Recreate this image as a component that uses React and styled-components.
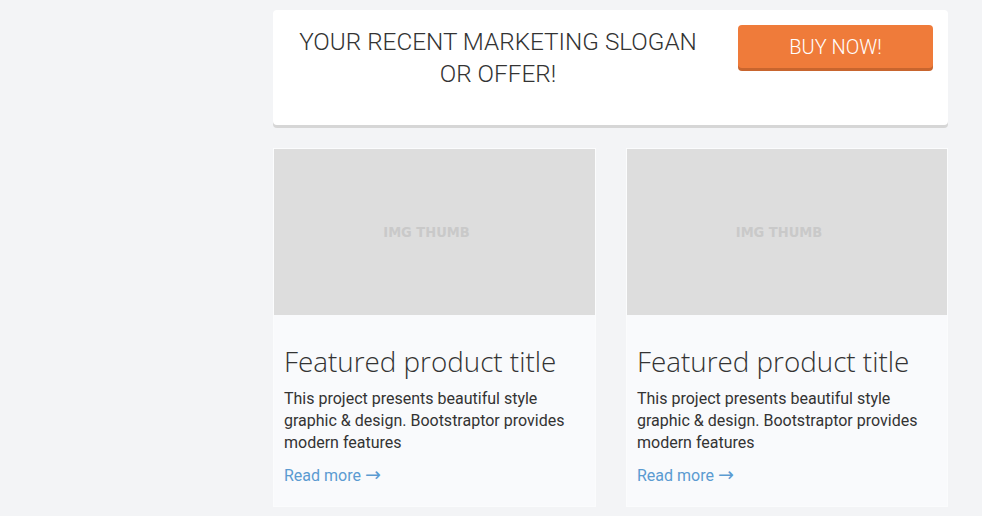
import styled, { createGlobalStyle } from "styled-components";

const GlobalStyle = createGlobalStyle`
  html, body {
    margin: 0;
    padding: 0;
    background: #f3f4f6;
  }
  body {
    font-family: Roboto, "Liberation Sans", sans-serif;
    color: #333;
  }
`;

const products = [
  {
    title: "Featured product title",
    text: "This project presents beautiful style graphic & design. Bootstraptor provides modern features",
  },
  {
    title: "Featured product title",
    text: "This project presents beautiful style graphic & design. Bootstraptor provides modern features",
  },
];

export default function App() {
  return (
    <Page>
      <GlobalStyle />
      <Column>
        <Banner>
          <Slogan>YOUR RECENT MARKETING SLOGAN OR OFFER!</Slogan>
          <BuyButton>BUY NOW!</BuyButton>
        </Banner>
        <Cards>
          {products.map((p, i) => (
            <Card key={i}>
              <Thumb>IMG THUMB</Thumb>
              <CardBody>
                <Title>{p.title}</Title>
                <Text>{p.text}</Text>
                <ReadMore href="#">
                  Read more <Arrow>&rarr;</Arrow>
                </ReadMore>
              </CardBody>
            </Card>
          ))}
        </Cards>
      </Column>
    </Page>
  );
}

const Page = styled.div`
  width: 982px;
  height: 516px;
  overflow: hidden;
  padding: 10px 0 0 273px;
  box-sizing: border-box;
`;

const Column = styled.div`
  width: 675px;
  display: flex;
  flex-direction: column;
  gap: 23px;
`;

const Banner = styled.div`
  height: 115px;
  box-sizing: border-box;
  background: #fff;
  border-radius: 4px;
  box-shadow: 0 3px 0 #d6d6d6;
  display: flex;
  align-items: flex-start;
  padding: 15px 15px 0 25px;
`;

const Slogan = styled.div`
  flex: 0 0 400px;
  margin-top: 1px;
  margin-right: auto;
  text-align: center;
  font-family: Roboto, "Liberation Sans", sans-serif;
  font-weight: 300;
  font-size: 24.3px;
  line-height: 32px;
  color: #333;
`;

const BuyButton = styled.button`
  width: 195px;
  height: 43px;
  border: none;
  border-radius: 4px;
  background: #ef7b3a;
  box-shadow: 0 3px 0 #c8652e;
  color: #fff;
  font-family: Roboto, "Liberation Sans", sans-serif;
  font-weight: 300;
  font-size: 20px;
  padding: 0;
  cursor: pointer;
`;

const Cards = styled.div`
  display: grid;
  grid-template-columns: 323px 322px;
  gap: 30px;
`;

const Card = styled.div`
  height: 359px;
  box-sizing: border-box;
  background: #f9fafc;
  border: 1px solid #fbfcfd;
  display: flex;
  flex-direction: column;
`;

const Thumb = styled.div`
  height: 166px;
  flex-shrink: 0;
  background: #dddddd;
  display: flex;
  align-items: center;
  justify-content: center;
  padding-right: 16px;
  font-family: "DejaVu Sans Condensed", "DejaVu Sans", Verdana, sans-serif;
  font-stretch: condensed;
  font-weight: bold;
  font-size: 14.5px;
  color: #c9c9c9;
`;

const CardBody = styled.div`
  padding: 31px 10px 20px;
`;

const Title = styled.h3`
  margin: 0 0 11px;
  font-family: "Open Sans", "Liberation Sans", sans-serif;
  font-weight: 300;
  font-size: 27.8px;
  line-height: 31px;
  color: #333;
`;

const Text = styled.p`
  margin: 0 0 11px;
  font-size: 16px;
  line-height: 22px;
  color: #333;
`;

const ReadMore = styled.a`
  display: block;
  font-size: 16px;
  line-height: 22px;
  color: #5b9bd1;
  text-decoration: none;
`;

const Arrow = styled.span`
  font-family: "DejaVu Sans", sans-serif;
  font-size: 19px;
  line-height: 1;
`;
